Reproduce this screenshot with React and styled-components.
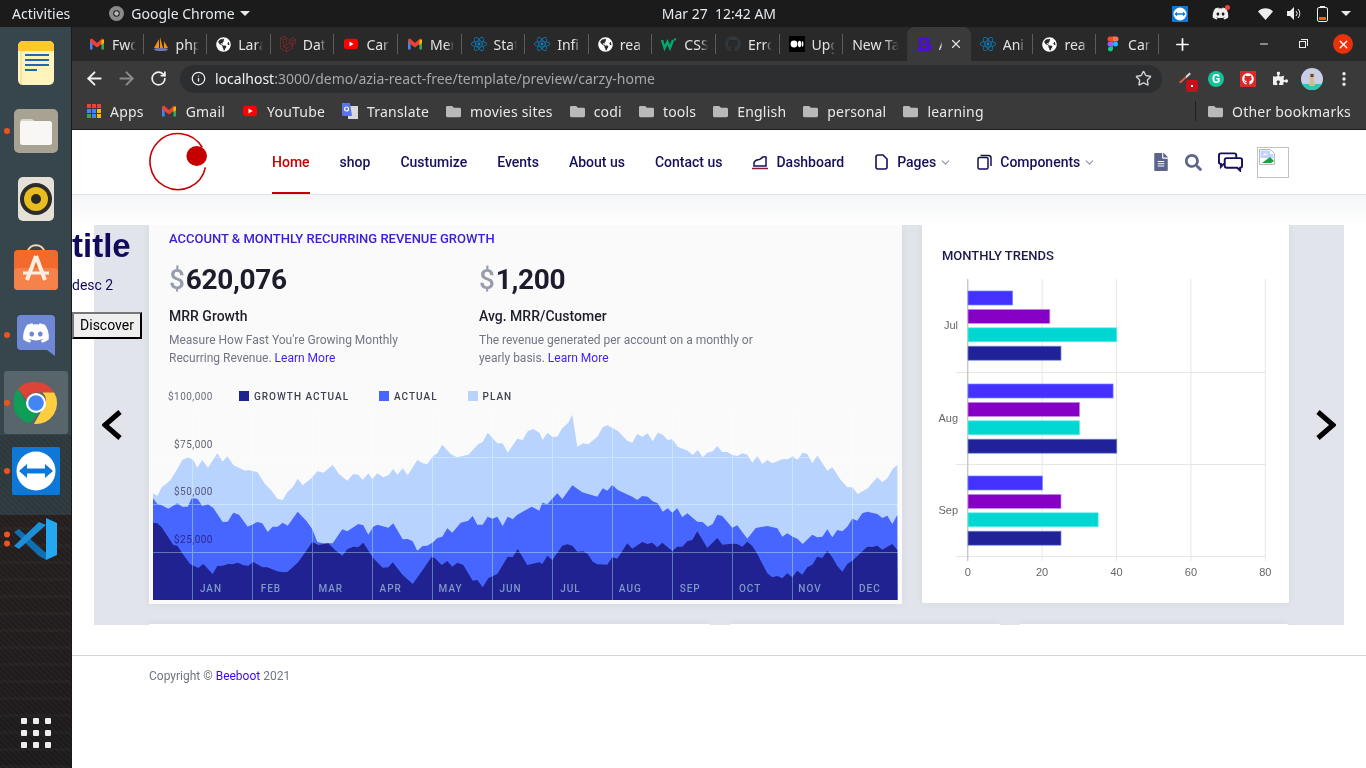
import React from 'react';
import styled, { createGlobalStyle } from 'styled-components';
import { ArrowLeft, ArrowRight, RotateCw, Info, Star, MoreVertical, Plus, X, Minus, ChevronDown } from 'lucide-react';
import { FaDiscord, FaFolder, FaFileAlt, FaSearch, FaGlobeAmericas, FaReact, FaLaravel, FaGithub, FaPuzzlePiece } from 'react-icons/fa';

const colors = {
  navy: '#14105a',
  red: '#c60000',
  ink: '#1c1c2c',
  muted: '#727585',
  link: '#3b1fff',
  growth: '#1f2290',
  actual: '#4766ff',
  plan: '#b9d3ff',
};

const GlobalStyle = createGlobalStyle`
  html, body {
    margin: 0;
    height: 100%;
    overflow: hidden;
    background: #fff;
    font-family: Roboto, "Liberation Sans", sans-serif;
  }
  * { box-sizing: border-box; }
`;

/* ---------- area chart data, read off the reference (page coordinates) ---------- */
const left = (pts) => pts.map(([x, y]) => [140 + x / 3, 380 + y / 3]);
const right = (pts) => pts.map(([x, y]) => [520 + x / 3, 400 + y / 3]);

const planLine = [
  ...left([[39,340],[52,348],[65,322],[90,302],[110,270],[127,240],[145,232],[160,240],[172,263],[187,240],[204,263],[232,220],[248,245],[262,228],[280,255],[315,272],[325,270],[352,276],[375,312],[395,332],[412,356],[428,360],[443,335],[458,322],[473,296],[488,316],[515,294],[532,274],[550,278],[578,255],[597,282],[622,302],[640,282],[655,284],[668,300],[685,280],[697,298],[712,280],[730,292],[745,286],[760,267],[772,284],[788,265],[803,286],[832,240],[848,250],[862,252],[880,228],[892,220],[907,194],[932,222],[950,232],[985,224],[1015,192],[1028,186],[1043,158],[1072,190],[1088,190],[1103,218],[1132,176],[1148,180],[1163,154],[1180,147],[1198,158]]),
  ...right([[68,120],[82,98],[97,110],[112,110],[127,85],[145,68],[157,44],[172,140],[190,130],[205,133],[232,110],[248,82],[262,76],[293,92],[322,122],[337,128],[352,102],[367,110],[383,100],[398,124],[413,98],[428,104],[443,120],[457,118],[473,140],[503,152],[518,165],[533,150],[548,172],[562,158],[578,154],[592,138],[607,156],[622,156],[637,165],[652,168],[667,160],[682,164],[697,188],[712,168],[727,192],[742,180],[757,190],[787,178],[803,178],[818,168],[832,180],[848,158],[862,162],[877,190],[892,166],[922,212],[937,202],[962,240],[982,262],[997,262],[1013,282],[1043,265],[1072,232],[1087,247],[1102,235],[1118,206],[1132,195]]),
];

const actualLine = [
  ...left([[39,355],[52,372],[65,376],[85,386],[112,370],[127,380],[143,380],[155,355],[172,356],[187,378],[204,373],[220,384],[248,426],[263,425],[280,398],[297,404],[323,440],[352,426],[367,430],[383,456],[398,440],[413,440],[428,428],[443,437],[473,395],[500,424],[517,448],[532,486],[550,490],[578,490],[607,448],[622,454],[655,432],[670,436],[685,464],[700,440],[712,434],[745,443],[760,430],[788,478],[803,477],[818,484],[832,512],[848,498],[862,497],[880,486],[892,474],[907,470],[922,445],[937,458],[962,428],[985,422],[998,408],[1012,434],[1028,434],[1043,410],[1058,416],[1072,410],[1088,438],[1103,410],[1118,418],[1132,404],[1175,380],[1198,392]]),
  ...right([[67,308],[82,313],[112,280],[127,297],[157,256],[187,277],[232,290],[248,265],[262,272],[277,255],[293,270],[337,290],[352,300],[367,288],[383,290],[398,304],[413,310],[428,335],[443,325],[457,338],[472,325],[487,352],[502,340],[532,365],[548,366],[563,380],[578,372],[592,344],[607,348],[637,383],[652,376],[682,416],[707,384],[742,378],[772,385],[787,410],[802,400],[818,410],[832,416],[848,432],[877,404],[892,412],[907,410],[922,388],[937,412],[952,390],[967,394],[982,380],[997,356],[1012,362],[1027,340],[1042,335],[1072,342],[1087,354],[1102,347],[1117,372],[1132,345]]),
];

const growthLine = [
  ...left([[39,428],[52,430],[65,442],[100,495],[112,497],[127,520],[150,552],[175,564],[190,552],[218,582],[232,558],[248,557],[265,552],[277,553],[293,548],[310,556],[325,557],[340,546],[368,562],[382,562],[412,574],[430,577],[443,575],[473,548],[490,525],[517,486],[535,495],[565,490],[585,510],[607,527],[622,508],[640,500],[655,502],[670,488],[700,535],[728,563],[745,562],[758,547],[788,585],[818,612],[848,570],[875,530],[885,535],[905,555],[922,543],[937,560],[952,548],[970,555],[998,602],[1012,600],[1028,622],[1045,595],[1072,582],[1103,530],[1118,532],[1133,507],[1162,555],[1198,547]]),
  ...right([[67,492],[82,467],[97,480],[127,437],[142,433],[157,437],[172,455],[190,454],[203,462],[218,485],[232,493],[262,494],[277,472],[292,476],[322,430],[337,446],[367,426],[382,432],[397,428],[412,442],[427,428],[457,453],[472,440],[487,440],[502,424],[517,420],[532,394],[562,444],[592,414],[607,434],[637,431],[652,432],[667,440],[682,425],[697,438],[712,462],[742,520],[757,532],[772,528],[787,535],[802,520],[817,532],[832,512],[847,524],[862,502],[877,494],[892,470],[907,474],[922,452],[937,472],[952,498],[967,515],[982,492],[997,482],[1042,440],[1057,441],[1072,437],[1087,449],[1117,432],[1132,450]]),
];

const areaPath = (line) =>
  `M153,600 L${line.map(([x, y]) => `${x.toFixed(1)},${y.toFixed(1)}`).join(' L')} L897.5,600 Z`;

const months = ['JAN', 'FEB', 'MAR', 'APR', 'MAY', 'JUN', 'JUL', 'AUG', 'SEP', 'OCT', 'NOV', 'DEC'];

const trends = [
  { label: 'Jul', top: 291, values: [12, 22, 40, 25] },
  { label: 'Aug', top: 384, values: [39, 30, 30, 40] },
  { label: 'Sep', top: 476, values: [20, 25, 35, 25] },
];
const barColors = ['#4431ff', '#8500c4', '#00d6d2', '#21229a'];
const barEdges = ['#6d8cff', '#c78ae6', '#66efec', '#6d8ccf'];

/* ---------- small logos ---------- */
const Gmail = () => (
  <svg width="16" height="16" viewBox="0 0 16 16">
    <path d="M1 3.5v10h2.6V7z" fill="#4285f4" />
    <path d="M15 3.5v10h-2.6V7z" fill="#34a853" />
    <path d="M1 3.5 3 2.5 8 7l5-4.5 2 1-1 3.5-6 4.5L2 7z" fill="#ea4335" />
    <path d="M12.4 4.4 15 3.5V7l-2.6 2z" fill="#fbbc04" />
  </svg>
);
const YouTube = () => (
  <svg width="16" height="16" viewBox="0 0 16 16">
    <rect x="1" y="2.8" width="14" height="10.4" rx="3" fill="#f00" />
    <path d="M6.5 5.6v4.8L10.6 8z" fill="#fff" />
  </svg>
);
const Pma = () => (
  <svg width="16" height="16" viewBox="0 0 16 16">
    <path d="M1 12 6 3v9zM7 1l3 11H7zM11 5l4 7h-4z" fill="#f29111" />
    <ellipse cx="8" cy="13.5" rx="7" ry="1.6" fill="#6c78af" />
  </svg>
);
const W3 = () => (
  <svg width="16" height="16" viewBox="0 0 16 16">
    <path d="M1 4l2.6 8L6.4 6l2.6 6L12 4" fill="none" stroke="#04aa6d" strokeWidth="2.4" />
    <circle cx="14" cy="3.4" r="1.2" fill="#04aa6d" />
  </svg>
);
const Medium = () => (
  <svg width="16" height="16" viewBox="0 0 16 16">
    <rect width="16" height="16" fill="#000" />
    <circle cx="5" cy="8" r="3.4" fill="#fff" />
    <ellipse cx="10.6" cy="8" rx="1.7" ry="3.2" fill="#fff" />
    <ellipse cx="13.6" cy="8" rx=".8" ry="2.9" fill="#fff" />
  </svg>
);
const Bootstrap = () => (
  <svg width="16" height="16" viewBox="0 0 16 16">
    <path d="M2 1h8.5a3.4 3.4 0 0 1 2 6.2A3.6 3.6 0 0 1 11 15H2v-3h1V4H2zM6 4v2.6h3.6V4zm0 5v3h4V9z" fill="#4a12c4" fillRule="evenodd" />
  </svg>
);
const Figma = () => (
  <svg width="16" height="16" viewBox="0 0 16 16">
    <path d="M5 .5h3v5H5a2.5 2.5 0 0 1 0-5z" fill="#f24e1e" />
    <path d="M8 .5h3a2.5 2.5 0 0 1 0 5H8z" fill="#ff7262" />
    <path d="M5 5.5h3v5H5a2.5 2.5 0 0 1 0-5z" fill="#a259ff" />
    <circle cx="10.5" cy="8" r="2.5" fill="#1abcfe" />
    <path d="M5 10.5h3V13a2.5 2.5 0 1 1-3-2.5z" fill="#0acf83" />
  </svg>
);
const Apps = () => (
  <svg width="14" height="14" viewBox="0 0 14 14">
    {['#ea4335', '#ea4335', '#ea4335', '#4285f4', '#4285f4', '#fbbc04', '#34a853', '#4285f4', '#fbbc04'].map((c, i) => (
      <rect key={i} x={(i % 3) * 5} y={Math.floor(i / 3) * 5} width="4" height="4" fill={c} />
    ))}
  </svg>
);
const Translate = () => (
  <svg width="16" height="18" viewBox="0 0 16 18">
    <rect x="6" y="4" width="10" height="13" fill="#d8d8d8" />
    <path d="M0 1h8l2 13H1.500a1.500 1.500 0 0 1-1.500-1.500z" fill="#5a75e8" />
    <circle cx="4.500" cy="7" r="2" fill="none" stroke="#fff" strokeWidth="1.200" />
  </svg>
);
const ChromeLogo = ({ size = 44 }) => (
  <svg width={size} height={size} viewBox="0 0 44 44">
    <path d="M22 1a21 21 0 0 1 18.200 10.500H22a10.500 10.500 0 0 0-9.800 6.700L4 8A21 21 0 0 1 22 1z" fill="#db4437" />
    <path d="M4 8l9 15.500a10.500 10.500 0 0 0 12 8L16 42.200A21 21 0 0 1 4 8z" fill="#0f9d58" />
    <path d="M40.200 11.500A21 21 0 0 1 20 43l9.500-17a10.500 10.500 0 0 0-1-14.500z" fill="#ffcd40" />
    <circle cx="22" cy="22" r="10" fill="#fff" />
    <circle cx="22" cy="22" r="7.800" fill="#4285f4" />
  </svg>
);
const ChromeLogoMono = () => (
  <svg width="15" height="15" viewBox="0 0 15 15">
    <circle cx="7.500" cy="7.500" r="7.500" fill="#8a8a8a" />
    <circle cx="7.500" cy="7.500" r="3.200" fill="#1b1b1b" />
    <circle cx="7.500" cy="7.500" r="2.200" fill="#bdbdbd" />
  </svg>
);
const TeamViewerLogo = ({ size = 48 }) => (
  <svg width={size} height={size} viewBox="0 0 48 48">
    <rect width="48" height="48" rx="2" fill="#0e78d8" />
    <circle cx="24" cy="24" r="19.500" fill="#fff" />
    <path d="M7 24l8-7v4.500h18V17l8 7-8 7v-4.500H15V31z" fill="#0e78d8" />
  </svg>
);

const NotesIcon = () => (
  <svg width="36" height="44" viewBox="0 0 36 44">
    <rect width="36" height="44" rx="5" fill="#fff2bd" />
    <path d="M0 10V5a5 5 0 0 1 5-5h26a5 5 0 0 1 5 5v5z" fill="#ffc92e" />
    <path d="M3 10v34" stroke="#f2d58e" />
    <path d="M7 14h24M7 19h24M7 24h24M7 29h12" stroke="#1d69ab" strokeWidth="2" />
  </svg>
);
const FilesIcon = () => (
  <svg width="44" height="44" viewBox="0 0 44 44">
    <rect width="44" height="44" rx="5" fill="#a8a292" />
    <path d="M6 13a3 3 0 0 1 3-3h9l4 3z" fill="#d9d5cb" />
    <rect x="6" y="12" width="32" height="24" rx="2.500" fill="#f8f7f5" />
  </svg>
);
const SpeakerIcon = () => (
  <svg width="36" height="44" viewBox="0 0 36 44">
    <rect width="36" height="44" rx="5" fill="#e5e1d6" />
    <circle cx="18" cy="22" r="16" fill="#2d2c2b" />
    <circle cx="18" cy="22" r="12" fill="#e8bd20" />
    <circle cx="18" cy="22" r="5" fill="#2a2925" />
  </svg>
);
const StoreIcon = () => (
  <svg width="44" height="46" viewBox="0 0 44 46">
    <path d="M14 8c0-9 16-9 16 0" fill="none" stroke="#f4d9b0" strokeWidth="2" />
    <rect y="6" width="44" height="40" rx="4" fill="#f26b2d" />
    <rect y="24" width="44" height="22" rx="4" fill="#f5824a" />
    <path d="M22 12 13 36M22 12l9 24" stroke="#fdeee2" strokeWidth="4" fill="none" />
    <path d="M9 29h26" stroke="#fdeee2" strokeWidth="3" />
  </svg>
);
const DiscordTile = () => (
  <svg width="38" height="41" viewBox="0 0 38 41">
    <path d="M4 0h30a4 4 0 0 1 4 4v37L30 35H4a4 4 0 0 1-4-4V4a4 4 0 0 1 4-4z" fill="#6f88d6" />
  </svg>
);
const VsCodeIcon = () => (
  <svg width="44" height="42" viewBox="0 0 44 42">
    <path d="M0 14l5-3 27 24-7 3z" fill="#0f6fb3" />
    <path d="M0 28l5 3L32 7 25 4z" fill="#1c8fd8" />
    <path d="M32 0l11 5v32l-11 5z" fill="#24a8f2" />
    <path d="M25 38l7 4V34z" fill="#0f6fb3" />
  </svg>
);

const DashboardGlyph = () => (
  <svg width="16" height="16" viewBox="0 0 16 16" fill="none" stroke={colors.navy} strokeWidth="1.500">
    <path d="M2 12V8.500C4 4 7 7 9 4.500c1-1.200 2.500-2 5-1.500v9z" />
    <path d="M0 14.500h16" stroke="#8b1a3a" />
  </svg>
);
const PageGlyph = () => (
  <svg width="15" height="16" viewBox="0 0 15 16" fill="none" stroke={colors.navy} strokeWidth="1.600">
    <path d="M2 3a2 2 0 0 1 2-2h5l4 4v8a2 2 0 0 1-2 2H4a2 2 0 0 1-2-2z" />
  </svg>
);
const LayersGlyph = () => (
  <svg width="15" height="16" viewBox="0 0 15 16" fill="none" stroke={colors.navy} strokeWidth="1.500">
    <rect x="1" y="3.500" width="10" height="11.500" rx="1.500" />
    <path d="M3.500 1.500h8a2.500 2.500 0 0 1 2.500 2.500v8" />
  </svg>
);
const BrokenImage = () => (
  <svg width="16" height="16" viewBox="0 0 16 16">
    <path d="M.5.500h11l4 4v11H.5z" fill="#fff" stroke="#b8b8b8" />
    <path d="M1.500 1.500h9.500v3.500h3.500v4H1.500z" fill="#c3d4fb" />
    <path d="M4 6c1-2 3-2 4 0z" fill="#fff" />
    <path d="M3 14l8-6 4 4-3 2z" fill="#10a83a" />
  </svg>
);
const Logo = () => (
  <svg width="60" height="60" viewBox="0 0 60 60" fill="none">
    <path d="M53.200 15.500A28 28 0 1 0 56.400 35.300" stroke={colors.red} strokeWidth="1.600" />
    <ellipse cx="47.700" cy="24" rx="10.300" ry="10" fill={colors.red} />
  </svg>
);
const Avatar = () => (
  <svg width="22" height="22" viewBox="0 0 22 22">
    <clipPath id="avatar-clip"><circle cx="11" cy="11" r="11" /></clipPath>
    <g clipPath="url(#avatar-clip)">
      <rect width="22" height="22" fill="#c9cde8" />
      <rect y="16" width="22" height="6" fill="#2cc5b6" />
      <path d="M9 4l1 2h2l1-2 .5 5-1 2 1.500 7H8l1-7-.5-2z" fill="#d8b98c" />
      <path d="M9.500 6h3v3h-3z" fill="#5a4634" />
    </g>
  </svg>
);

/* ---------- desktop shell ---------- */
const Screen = styled.div`
  width: 1366px;
  height: 768px;
  display: flex;
  flex-direction: column;
  overflow: hidden;
`;

const TopBar = styled.header`
  height: 27px;
  flex: none;
  display: flex;
  align-items: center;
  padding: 0 15px 0 12px;
  background: #1b1b1b;
  color: #e4e9ee;
  font: 14px "Noto Sans", sans-serif;
`;

const AppMenu = styled.div`
  display: flex;
  align-items: center;
  gap: 7px;
  margin-left: 39px;
`;

const Caret = styled.span`
  width: 0;
  height: 0;
  border-left: 5px solid transparent;
  border-right: 5px solid transparent;
  border-top: 5px solid #e8e8e8;
  margin-left: ${(p) => p.$gap || 0}px;
`;

const Clock = styled.div`
  margin-left: 412px;
  white-space: pre;
`;

const TrayIcons = styled.div`
  margin-left: auto;
  display: flex;
  align-items: center;
`;

const TraySlot = styled.span`
  position: relative;
  display: flex;
  align-items: center;
  justify-content: center;
  margin-left: ${(p) => p.$gap}px;
  color: #eee;
`;

const NotifyDot = styled.i`
  position: absolute;
  top: 0;
  right: -1px;
  width: 5px;
  height: 5px;
  border-radius: 50%;
  background: #f0433a;
`;

const Desktop = styled.div`
  flex: 1;
  display: flex;
  min-height: 0;
`;

const Dock = styled.aside`
  width: 72px;
  flex: none;
  display: flex;
  flex-direction: column;
  padding-top: 2px;
  border-right: 1px solid #17191a;
  background:
    repeating-linear-gradient(45deg, rgba(255, 255, 255, 0.025) 0 2px, transparent 2px 4px) bottom / 100% 333px no-repeat,
    repeating-linear-gradient(0deg, rgba(255, 255, 255, 0.025) 0 3px, transparent 3px 17px) bottom / 100% 253px no-repeat,
    linear-gradient(180deg, #37464d 0, #37464d 408px, #2d383d 408px, #2d383d 488px, #241e1e 488px, #1d1a1b 100%);
`;

const DockItem = styled.div`
  position: relative;
  height: 68px;
  flex: none;
  display: flex;
  align-items: center;
  justify-content: center;
  color: #fff;

  ${(p) =>
    p.$active &&
    `&::before {
      content: '';
      position: absolute;
      left: 4px;
      right: 3px;
      top: 2px;
      bottom: 3px;
      border-radius: 3px;
      background: rgba(255, 255, 255, 0.17);
    }`}

  svg { position: relative; }
`;

const RunDots = styled.span`
  position: absolute;
  left: 4px;
  top: 50%;
  display: flex;
  flex-direction: column;
  gap: 3px;
  transform: translateY(-50%);

  i {
    width: 6px;
    height: 6px;
    border-radius: 50%;
    background: #e9541f;
  }
`;

const DiscordFace = styled.span`
  position: absolute;
  left: 22px;
  top: 18px;
  color: #fff;
  display: flex;
`;

const ShowApps = styled.div`
  margin: auto 0 20px 21px;
  display: grid;
  grid-template-columns: repeat(3, 6px);
  gap: 6px;

  i {
    height: 6px;
    border-radius: 1px;
    background: #eee;
  }
`;

/* ---------- browser ---------- */
const Browser = styled.div`
  flex: 1;
  min-width: 0;
  display: flex;
  flex-direction: column;
  background: #fff;
`;

const TabStrip = styled.div`
  height: 34px;
  flex: none;
  display: flex;
  padding-left: 8px;
  background: #292929;
`;

const Tab = styled.div`
  position: relative;
  width: ${(p) => p.$width || 63.6}px;
  flex: none;
  display: flex;
  align-items: center;
  gap: 7px;
  padding: 0 8px 0 9px;
  color: #e3e3e3;
  font: 14px "Noto Sans", sans-serif;
  background: ${(p) => (p.$active ? '#3a3a3a' : 'transparent')};
  border-radius: ${(p) => (p.$active ? '8px 8px 0 0' : '0')};

  ${(p) =>
    p.$divider &&
    `&::after {
      content: '';
      position: absolute;
      right: 0;
      top: 7px;
      height: 20px;
      width: 1px;
      background: #5c5c5c;
    }`}

  svg { flex: none; }
`;

const TabLabel = styled.span`
  flex: 1;
  min-width: 0;
  overflow: hidden;
  white-space: nowrap;
  -webkit-mask-image: linear-gradient(90deg, #000 70%, transparent);
  mask-image: linear-gradient(90deg, #000 70%, transparent);
`;

const NewTab = styled.div`
  display: flex;
  align-items: center;
  margin-left: 14px;
  color: #fff;
`;

const WindowControls = styled.div`
  margin-left: auto;
  padding-right: 13px;
  display: flex;
  align-items: center;
  color: #eee;
`;

const WinButton = styled.span`
  width: 39px;
  display: flex;
  justify-content: center;
`;

const RestoreGlyph = styled.span`
  position: relative;
  width: 7px;
  height: 7px;
  border: 1px solid #eee;

  &::after {
    content: '';
    position: absolute;
    left: 1px;
    top: -3px;
    width: 6px;
    height: 6px;
    border-top: 1px solid #eee;
    border-right: 1px solid #eee;
  }
`;

const CloseButton = styled.span`
  width: 20px;
  height: 20px;
  margin-left: 11px;
  border-radius: 50%;
  background: #e8320a;
  color: #fff;
  display: flex;
  align-items: center;
  justify-content: center;
`;

const Toolbar = styled.div`
  height: 32px;
  flex: none;
  display: flex;
  padding: 4px 0 0 6px;
  background: #3a3a3a;
`;

const ToolButton = styled.span`
  position: relative;
  width: 32px;
  height: 28px;
  flex: none;
  display: flex;
  align-items: center;
  justify-content: center;
  padding-bottom: 1px;
  color: ${(p) => (p.$dim ? '#8c8c8c' : '#f1f1f1')};
`;

const Omnibox = styled.div`
  width: 982px;
  height: 28px;
  flex: none;
  margin: 0 6px;
  padding: 0 10px 1px 11px;
  display: flex;
  align-items: center;
  gap: 9px;
  border-radius: 14px;
  background: #2d2e30;
  color: #f1f1f1;
  font: 14px "Noto Sans", sans-serif;
`;

const Url = styled.span`
  flex: 1;
  color: #a4a7ab;

  b {
    font-weight: 400;
    color: #f1f1f1;
  }
`;

const ExtBadge = styled.span`
  position: absolute;
  right: 2px;
  bottom: 1px;
  width: 12px;
  height: 12px;
  border-radius: 2px;
  background: #c8101c;

  &::after {
    content: '';
    position: absolute;
    left: 5px;
    top: 5px;
    width: 2px;
    height: 2px;
    background: #fff;
  }
`;

const Dropper = styled.span`
  position: absolute;
  left: 10px;
  top: 12px;
  width: 14px;
  height: 2px;
  background: linear-gradient(90deg, #e05a50 60%, #ddd 60%);
  transform: rotate(-42deg);
`;

const Grammarly = styled.span`
  width: 16px;
  height: 16px;
  border-radius: 50%;
  background: #15c39a;
  color: #fff;
  font: 700 12px/16px Roboto, sans-serif;
  text-align: center;
`;

const RedExt = styled.span`
  width: 16px;
  height: 16px;
  background: #dc2a2a;
  display: flex;
  align-items: center;
  justify-content: center;
  color: #fff;
`;

const Bookmarks = styled.div`
  height: 37px;
  flex: none;
  display: flex;
  align-items: center;
  gap: 17px;
  padding: 0 15px 0 15px;
  border-bottom: 1px solid #1e1e1e;
  background: #3a3a3a;
  color: #e8e8e8;
  font: 14px "Noto Sans", sans-serif;
  letter-spacing: 0.2px;
`;

const Bookmark = styled.span`
  display: flex;
  align-items: center;
  gap: 9px;
  white-space: nowrap;

  svg { flex: none; }
`;

const BookmarkDivider = styled.span`
  width: 1px;
  height: 20px;
  margin-left: auto;
  margin-right: -5px;
  background: #1f1f1f;
`;

/* ---------- page ---------- */
const Page = styled.main`
  flex: 1;
  min-height: 0;
  overflow: hidden;
  background: #fff;
`;

const Nav = styled.nav`
  height: 65px;
  display: flex;
  align-items: stretch;
  padding: 0 77px 0 77px;
  border-bottom: 1px solid #e1e4ea;
`;

const LogoBox = styled.div`
  width: 60px;
  margin-right: 63px;
  display: flex;
  align-items: center;
`;

const NavLinks = styled.div`
  display: flex;
  align-items: stretch;
  gap: 30px;
`;

const NavLink = styled.a`
  display: flex;
  align-items: center;
  gap: 8px;
  border-top: 2px solid transparent;
  border-bottom: 2px solid ${(p) => (p.$active ? colors.red : 'transparent')};
  color: ${(p) => (p.$active ? colors.red : colors.navy)};
  font-size: 14px;
  font-weight: 500;
  white-space: nowrap;

  svg { flex: none; }
`;

const NavChevron = styled(ChevronDown)`
  margin-left: -5px;
  margin-right: -5px;
  color: #8d90a8;
`;

const NavTools = styled.div`
  margin-left: auto;
  display: flex;
  align-items: center;
  gap: 15px;
  color: #5a648c;
`;

const ChatIcon = styled.svg`
  margin: 0 -1px 0 1px;
`;

const ImageBox = styled.div`
  width: 32px;
  height: 31px;
  margin-top: 1px;
  padding: 1px;
  border: 1px solid #c0c0c0;
`;

const Content = styled.div`
  padding: 30px 22px 0;
  background: linear-gradient(180deg, #f4f5f7 0, #fff 30px);
`;

const Hero = styled.div`
  position: relative;
`;

const Caption = styled.div`
  position: absolute;
  z-index: 2;
  left: -22px;
  top: 0;
  color: #120a5c;
`;

const CaptionTitle = styled.h1`
  margin: 1px 0 0;
  height: 40px;
  font-family: "Liberation Sans", Arial, sans-serif;
  font-size: 33px;
  line-height: 40px;
  font-weight: 700;
`;

const CaptionText = styled.p`
  margin: 10px 0 0;
  font-size: 14px;
  line-height: 18px;
`;

const DiscoverButton = styled.button`
  display: block;
  width: 70px;
  height: 27px;
  margin-top: 18px;
  padding: 0 0 1px;
  border: 2px outset #767676;
  border-color: #777 #222 #222 #777;
  background: #efefef;
  color: #000;
  font: 14px Roboto, sans-serif;
`;

const Slide = styled.section`
  position: relative;
  height: 400px;
  overflow: hidden;
  padding-left: 55px;
  background: #e1e4ea;
`;

const SlideArrow = styled.span`
  position: absolute;
  top: 185px;
  ${(p) => (p.$side === 'left' ? 'left: 8px;' : 'right: 8px;')}
  display: flex;
`;

const CardRow = styled.div`
  display: flex;
  align-items: flex-start;
  gap: 20px;
  margin-bottom: 20px;
`;

const RevenueCard = styled.article`
  width: 753px;
  flex: none;
  padding: 6px 4px 4px;
  background: #fafafa;
  box-shadow: 0 0 8px rgba(28, 39, 60, 0.06);
`;

const TrendsCard = styled.article`
  width: 367px;
  flex: none;
  padding-top: 23px;
  padding-bottom: 13px;
  border-radius: 0 0 2px 2px;
  background: #fff;
  box-shadow: 0 0 8px rgba(28, 39, 60, 0.06);
`;

const RevenueHead = styled.div`
  padding-left: 16px;
`;

const Eyebrow = styled.h6`
  margin: 0;
  font-size: 13px;
  line-height: 16px;
  font-weight: 500;
  text-transform: uppercase;
  color: #3a20d6;
`;

const Metrics = styled.div`
  display: flex;
  margin-top: 16px;
`;

const Metric = styled.div`
  width: 310px;
`;

const Amount = styled.div`
  height: 34px;
  font-size: 28px;
  line-height: 34px;
  font-weight: 700;
  letter-spacing: -0.3px;
  color: ${colors.ink};

  span { color: #989dad; font-weight: 500; margin-right: 1px; }
`;

const MetricName = styled.div`
  margin-top: 10px;
  font-size: 14px;
  line-height: 18px;
  font-weight: 500;
  color: ${colors.ink};
`;

const MetricText = styled.p`
  width: 290px;
  margin: 6px 0 0;
  font-size: 12px;
  line-height: 18px;
  color: ${colors.muted};

  a { color: ${colors.link}; }
`;

const LegendRow = styled.div`
  display: flex;
  align-items: center;
  height: 16px;
  margin-top: 21px;
  padding-left: 15px;
`;

const AxisValue = styled.span`
  width: 46px;
  font-size: 10px;
  letter-spacing: 0.45px;
  color: #6b6e7e;
`;

const LegendItem = styled.span`
  display: flex;
  align-items: center;
  gap: 5px;
  margin-left: ${(p) => p.$gap}px;
  font-size: 10px;
  font-weight: 500;
  letter-spacing: 1px;
  color: #3f4152;
  white-space: nowrap;

  i {
    width: 10px;
    height: 10px;
    background: ${(p) => p.$color};
  }
`;

const AreaChartBox = styled.div`
  position: relative;
  margin-top: 6px;
  height: 190px;
`;

const YLabel = styled.span`
  position: absolute;
  top: ${(p) => p.$top}px;
  left: 21px;
  font-size: 10px;
  line-height: 12px;
  letter-spacing: 0.45px;
  color: ${(p) => p.$color};
`;

const GridGroup = styled.g`
  mix-blend-mode: screen;
`;

const TrendsTitle = styled.h6`
  margin: 0 0 6px 20px;
  font-size: 13px;
  line-height: 16px;
  font-weight: 500;
  text-transform: uppercase;
  color: #1c1a48;
`;

const TrendsSvg = styled.svg`
  display: block;
  font: 11px "Liberation Sans", Arial, sans-serif;
  fill: #666;
`;

const NextCard = styled.div`
  width: ${(p) => p.$width}px;
  flex: none;
  height: 60px;
  background: #fff;
  box-shadow: 0 0 8px rgba(28, 39, 60, 0.06);
`;

const Footer = styled.footer`
  margin-top: 30px;
  padding: 12px 77px;
  border-top: 1px solid #cfd3dc;
  font-size: 12px;
  line-height: 16px;
  color: ${colors.muted};

  a { color: #3b00ff; }
`;

const tabs = [
  { icon: <Gmail />, label: 'Fwd' },
  { icon: <Pma />, label: 'php' },
  { icon: <FaGlobeAmericas size={15} color="#fff" />, label: 'Lara' },
  { icon: <FaLaravel size={16} color="#a8272b" />, label: 'Dat' },
  { icon: <YouTube />, label: 'Car' },
  { icon: <Gmail />, label: 'Mer' },
  { icon: <FaReact size={16} color="#0b82c4" />, label: 'Stat' },
  { icon: <FaReact size={16} color="#0b82c4" />, label: 'Infi' },
  { icon: <FaGlobeAmericas size={15} color="#fff" />, label: 'rea' },
  { icon: <W3 />, label: 'CSS' },
  { icon: <FaGithub size={16} color="#33383d" />, label: 'Erro' },
  { icon: <Medium />, label: 'Upg' },
  { label: 'New Ta' },
];

const tabsAfter = [
  { icon: <FaReact size={16} color="#0b82c4" />, label: 'Ani' },
  { icon: <FaGlobeAmericas size={15} color="#fff" />, label: 'rea' },
  { icon: <Figma />, label: 'Car' },
];

const bookmarks = [
  { icon: <Apps />, label: 'Apps' },
  { icon: <Gmail />, label: 'Gmail' },
  { icon: <YouTube />, label: 'YouTube' },
  { icon: <Translate />, label: 'Translate' },
  ...['movies sites', 'codi', 'tools', 'English', 'personal', 'learning'].map((label) => ({
    icon: <FaFolder size={15} color="#b9b9b9" />,
    label,
  })),
];

const AreaChart = () => (
  <svg width="745" height="190" viewBox="153 410 745 190" style={{ display: 'block' }}>
    <path d={areaPath(planLine)} fill={colors.plan} />
    <path d={areaPath(actualLine)} fill={colors.actual} />
    <path d={areaPath(growthLine)} fill={colors.growth} />
    <GridGroup stroke="rgb(70,100,80)" strokeWidth="1">
      {[457.5, 504.5, 552.5].map((y) => (
        <line key={y} x1="153" x2="898" y1={y} y2={y} />
      ))}
      {months.map((m, i) => (
        <line key={m} x1={192.5 + i * 60} x2={192.5 + i * 60} y1="410" y2="600" />
      ))}
    </GridGroup>
    {months.map((m, i) => (
      <text
        key={m}
        x={211 + i * 59.9}
        y="591.500"
        textAnchor="middle"
        fill="#7f98c8"
        fontFamily="Roboto, sans-serif"
        fontSize="10"
        fontWeight="500"
        letterSpacing="1"
      >
        {m}
      </text>
    ))}
  </svg>
);

const scaleX = (v) => 967.7 + v * 3.72;

const TrendsChart = () => (
  <TrendsSvg width="367" height="320" viewBox="922 270 367 320">
    <g stroke="#e6e6e6" strokeWidth="1">
      {[20, 40, 60, 80].map((v) => (
        <line key={v} x1={scaleX(v)} x2={scaleX(v)} y1="279" y2="561" />
      ))}
      {[372.5, 464.5, 556.5].map((y) => (
        <line key={y} x1="956" x2="1266" y1={y} y2={y} />
      ))}
    </g>
    <line x1="967.7" x2="967.7" y1="279" y2="561" stroke="#c9c9c9" strokeWidth="1.500" />
    {trends.map((group) => (
      <g key={group.label}>
        {group.values.map((v, i) => (
          <rect
            key={i}
            x="968"
            y={group.top + i * 18.4}
            width={v * 3.72}
            height="14"
            fill={barColors[i]}
            stroke={barEdges[i]}
            strokeWidth="0.700"
          />
        ))}
        <text x="958" y={group.top + 38} textAnchor="end">
          {group.label}
        </text>
      </g>
    ))}
    {[0, 20, 40, 60, 80].map((v) => (
      <text key={v} x={scaleX(v)} y="576" textAnchor="middle">
        {v}
      </text>
    ))}
  </TrendsSvg>
);

const App = () => (
  <Screen>
    <GlobalStyle />
    <TopBar>
      <span>Activities</span>
      <AppMenu>
        <ChromeLogoMono />
        <span>Google Chrome</span>
        <Caret $gap={-2} />
      </AppMenu>
      <Clock>Mar 27  12:42 AM</Clock>
      <TrayIcons>
        <TraySlot $gap={0}>
          <TeamViewerLogo size={16} />
        </TraySlot>
        <TraySlot $gap={24}>
          <FaDiscord size={17} />
          <NotifyDot />
        </TraySlot>
        <TraySlot $gap={29}>
          <svg width="15" height="12" viewBox="0 0 15 12">
            <path d="M7.500 12 0 3.500C4-.8 11-.8 15 3.500z" fill="#eee" />
          </svg>
        </TraySlot>
        <TraySlot $gap={14}>
          <svg width="14" height="13" viewBox="0 0 14 13" fill="none">
            <path d="M0 4h3l4-4v13L3 9H0z" fill="#eee" />
            <path d="M9 4a3.500 3.500 0 0 1 0 5M11 2a6.500 6.500 0 0 1 0 9" stroke="#eee" />
          </svg>
        </TraySlot>
        <TraySlot $gap={16}>
          <svg width="11" height="16" viewBox="0 0 11 16" fill="none">
            <rect x=".5" y="1.500" width="10" height="14" rx="1.500" stroke="#eee" />
            <rect x="3" y="0" width="5" height="1.500" fill="#eee" />
            <rect x="2" y="11" width="7" height="3" fill="#e9641f" />
          </svg>
        </TraySlot>
        <TraySlot $gap={13}>
          <Caret />
        </TraySlot>
      </TrayIcons>
    </TopBar>

    <Desktop>
      <Dock>
        <DockItem><NotesIcon /></DockItem>
        <DockItem><RunDots><i /></RunDots><FilesIcon /></DockItem>
        <DockItem><SpeakerIcon /></DockItem>
        <DockItem><StoreIcon /></DockItem>
        <DockItem>
          <RunDots><i /></RunDots>
          <DiscordTile />
          <DiscordFace><FaDiscord size={28} /></DiscordFace>
        </DockItem>
        <DockItem $active><RunDots><i /></RunDots><ChromeLogo /></DockItem>
        <DockItem><RunDots><i /></RunDots><TeamViewerLogo /></DockItem>
        <DockItem><RunDots><i /><i /></RunDots><VsCodeIcon /></DockItem>
        <ShowApps>
          {Array.from({ length: 9 }, (_, i) => <i key={i} />)}
        </ShowApps>
      </Dock>

      <Browser>
        <TabStrip>
          {tabs.map((tab, i) => (
            <Tab key={i} $divider={i < tabs.length - 1}>
              {tab.icon}
              <TabLabel>{tab.label}</TabLabel>
            </Tab>
          ))}
          <Tab $active $width={64}>
            <Bootstrap />
            <TabLabel>A</TabLabel>
            <X size={14} strokeWidth={2} />
          </Tab>
          {tabsAfter.map((tab, i) => (
            <Tab key={i} $divider $width={62.700}>
              {tab.icon}
              <TabLabel>{tab.label}</TabLabel>
            </Tab>
          ))}
          <NewTab><Plus size={19} strokeWidth={2.200} /></NewTab>
          <WindowControls>
            <WinButton><Minus size={12} /></WinButton>
            <WinButton><RestoreGlyph /></WinButton>
            <CloseButton><X size={13} strokeWidth={2.500} /></CloseButton>
          </WindowControls>
        </TabStrip>

        <Toolbar>
          <ToolButton><ArrowLeft size={21} strokeWidth={2.200} /></ToolButton>
          <ToolButton $dim><ArrowRight size={21} strokeWidth={2.200} /></ToolButton>
          <ToolButton><RotateCw size={17} strokeWidth={2.400} /></ToolButton>
          <Omnibox>
            <Info size={15} strokeWidth={2} />
            <Url><b>localhost</b>:3000/demo/azia-react-free/template/preview/carzy-home</Url>
            <Star size={17} color="#d0d0d0" />
          </Omnibox>
          <ToolButton><Dropper /><ExtBadge /></ToolButton>
          <ToolButton><Grammarly>G</Grammarly></ToolButton>
          <ToolButton>
            <RedExt><FaGithub size={12} /></RedExt>
          </ToolButton>
          <ToolButton><FaPuzzlePiece size={15} /></ToolButton>
          <ToolButton><Avatar /></ToolButton>
          <ToolButton><MoreVertical size={18} strokeWidth={2.500} /></ToolButton>
        </Toolbar>

        <Bookmarks>
          {bookmarks.map((b) => (
            <Bookmark key={b.label}>
              {b.icon}
              {b.label}
            </Bookmark>
          ))}
          <BookmarkDivider />
          <Bookmark>
            <FaFolder size={15} color="#b9b9b9" />
            Other bookmarks
          </Bookmark>
        </Bookmarks>

        <Page>
          <Nav>
            <LogoBox><Logo /></LogoBox>
            <NavLinks>
              <NavLink $active>Home</NavLink>
              <NavLink>shop</NavLink>
              <NavLink>Custumize</NavLink>
              <NavLink>Events</NavLink>
              <NavLink>About us</NavLink>
              <NavLink>Contact us</NavLink>
              <NavLink><DashboardGlyph />Dashboard</NavLink>
              <NavLink><PageGlyph />Pages<NavChevron size={13} /></NavLink>
              <NavLink><LayersGlyph />Components<NavChevron size={13} /></NavLink>
            </NavLinks>
            <NavTools>
              <FaFileAlt size={18} />
              <FaSearch size={17} />
              <ChatIcon width="25" height="20" viewBox="0 0 26 20" fill="#fff" stroke={colors.navy} strokeWidth="2">
                <path d="M3 1h14a2 2 0 0 1 2 2v7a2 2 0 0 1-2 2H6l-3 3v-3a2 2 0 0 1-2-2V3a2 2 0 0 1 2-2z" />
                <path d="M9 6h14a2 2 0 0 1 2 2v6a2 2 0 0 1-2 2v3l-3-3H9a2 2 0 0 1-2-2V8a2 2 0 0 1 2-2z" />
              </ChatIcon>
              <ImageBox><BrokenImage /></ImageBox>
            </NavTools>
          </Nav>

          <Content>
            <Hero>
              <Caption>
                <CaptionTitle>title</CaptionTitle>
                <CaptionText>desc 2</CaptionText>
                <DiscoverButton>Discover</DiscoverButton>
              </Caption>
              <Slide>
                <SlideArrow $side="left">
                  <svg width="20" height="30" viewBox="0 0 20 30" fill="none">
                    <path d="M18 2 3 15l15 13" stroke="#000" strokeWidth="5" />
                  </svg>
                </SlideArrow>
                <SlideArrow $side="right">
                  <svg width="20" height="30" viewBox="0 0 20 30" fill="none">
                    <path d="M2 2l15 13L2 28" stroke="#000" strokeWidth="5" />
                  </svg>
                </SlideArrow>

                <CardRow>
                  <RevenueCard>
                    <RevenueHead>
                      <Eyebrow>Account &amp; Monthly Recurring Revenue Growth</Eyebrow>
                      <Metrics>
                        <Metric>
                          <Amount><span>$</span>620,076</Amount>
                          <MetricName>MRR Growth</MetricName>
                          <MetricText>
                            Measure How Fast You're Growing Monthly<br />
                            Recurring Revenue. <a>Learn More</a>
                          </MetricText>
                        </Metric>
                        <Metric>
                          <Amount><span>$</span>1,200</Amount>
                          <MetricName>Avg. MRR/Customer</MetricName>
                          <MetricText>
                            The revenue generated per account on a monthly or<br />
                            yearly basis. <a>Learn More</a>
                          </MetricText>
                        </Metric>
                      </Metrics>
                    </RevenueHead>
                    <LegendRow>
                      <AxisValue>$100,000</AxisValue>
                      <LegendItem $gap={25} $color={colors.growth}><i />GROWTH ACTUAL</LegendItem>
                      <LegendItem $gap={30} $color={colors.actual}><i />ACTUAL</LegendItem>
                      <LegendItem $gap={30} $color={colors.plan}><i />PLAN</LegendItem>
                    </LegendRow>
                    <AreaChartBox>
                      <AreaChart />
                      <YLabel $top={29} $color="#5f6274">$75,000</YLabel>
                      <YLabel $top={76} $color="#55577a">$50,000</YLabel>
                      <YLabel $top={124} $color="#2a2a8c">$25,000</YLabel>
                    </AreaChartBox>
                  </RevenueCard>
                  <TrendsCard>
                    <TrendsTitle>Monthly Trends</TrendsTitle>
                    <TrendsChart />
                  </TrendsCard>
                </CardRow>
                <CardRow>
                  <NextCard $width={561} />
                  <NextCard $width={270} />
                  <NextCard $width={268} />
                </CardRow>
              </Slide>
            </Hero>
          </Content>
          <Footer>
            Copyright © <a>Beeboot</a> 2021
          </Footer>
        </Page>
      </Browser>
    </Desktop>
  </Screen>
);

export default App;
